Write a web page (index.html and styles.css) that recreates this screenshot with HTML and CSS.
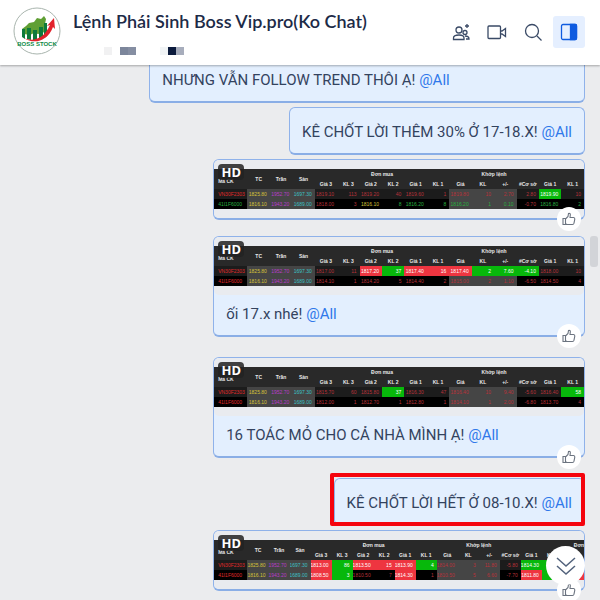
FILE: index.html
```html
<!DOCTYPE html>
<html lang="vi">
<head>
    <meta charset="UTF-8">
    <meta name="viewport" content="width=device-width, initial-scale=1.0">
    <title>Lệnh Phái Sinh Boss Vip.pro</title>
    <link rel="stylesheet" href="styles.css">
</head>
<body>
    <header class="chat-header">
        <svg class="avatar" viewBox="0 0 48 48" role="img" aria-label="Boss Stock">
            <circle cx="24" cy="24" r="23" fill="#fff" stroke="#a9b5ae" stroke-width="1"/>
            <path d="M9 22l4-3 3-3 5-1 3-4 4 1 3-3 2 3-1 5 1 5-3 4-5 1-4-1-4 2-6-1z" fill="#5f9f34"/>
            <path d="M9 22h3v10l-3-2zM14 21h4v12l-4-1zM20 23h4v10h-4zM26 20h4v12l-4 1zM31 16h3v13l-3 2z" fill="#0e7a3c"/>
            <path d="M11 31c9 4 20 1 26-13l-3 1 7-8 1 11-2-2c-5 14-19 18-29 11z" fill="#e2222c"/>
            <text x="24" y="39" text-anchor="middle" class="avatar-text">BOSS STOCK</text>
        </svg>
        <div class="chat-info">
            <h1>Lệnh Phái Sinh Boss Vip.pro(Ko Chat)</h1>
            <div class="masked">
                <span class="m1"></span>
                <span class="m2"></span>
                <span class="m3"></span>
            </div>
        </div>
        <nav class="actions">
            <button type="button" aria-label="Thêm thành viên">
                <svg viewBox="0 0 20 20">
                    <circle cx="8" cy="8" r="3"/>
                    <path d="M2.500 17.500v-1.500c0-2 2-3 5.500-3s5 1 5 3v1.500z"/>
                    <circle cx="14" cy="10.500" r="2"/>
                    <path d="M14 14c2.500 0 4 1 4 3h-3M16 2v4M14 4h4"/>
                </svg>
            </button>
            <button type="button" aria-label="Gọi video">
                <svg viewBox="0 0 20 20">
                    <rect x="1" y="4" width="12.500" height="12.500" rx="1"/>
                    <path d="M13.500 9h1.500l3.500-2.500v8L15 12h-1.500"/>
                </svg>
            </button>
            <button type="button" aria-label="Tìm kiếm">
                <svg viewBox="0 0 20 20">
                    <circle cx="9" cy="9" r="6.500"/>
                    <path d="M14 14l4.500 4.500"/>
                </svg>
            </button>
            <button type="button" class="active" aria-label="Thông tin hội thoại">
                <svg viewBox="0 0 20 20">
                    <rect x="2.500" y="2.500" width="15" height="15" rx="1.500"/>
                    <path d="M11.500 2.500h5q1 0 1 1v13q0 1-1 1h-5z" class="fill"/>
                </svg>
            </button>
        </nav>
    </header>

    <main class="chat">
        <div class="message long">
            GIỮ Ạ, CẢ NHÀ CHỐT MỘT PHẦN VỊ THẾ, ĐANG LỢI
            NHƯNG VẪN FOLLOW TREND THÔI Ạ! <a href="#">@All</a></div>
        <div class="message">KÊ CHỐT LỜI THÊM 30% Ở 17-18.X! <a href="#">@All</a></div>

        <div class="message photo">
            <div class="board" data-board="0"></div>
            <span class="hd">HD</span>
            <button type="button" class="like" aria-label="Thích"></button>
        </div>

        <div class="message photo">
            <div class="board" data-board="1"></div>
            <span class="hd">HD</span>
            <p>ối 17.x nhé! <a href="#">@All</a></p>
            <button type="button" class="like" aria-label="Thích"></button>
        </div>

        <div class="message photo">
            <div class="board" data-board="2"></div>
            <span class="hd">HD</span>
            <p>16 TOÁC MỎ CHO CẢ NHÀ MÌNH Ạ! <a href="#">@All</a></p>
            <button type="button" class="like" aria-label="Thích"></button>
        </div>

        <div class="message marked">KÊ CHỐT LỜI HẾT Ở 08-10.X! <a href="#">@All</a></div>

        <div class="message photo">
            <div class="board" data-board="3"></div>
            <span class="hd">HD</span>
            <button type="button" class="like" aria-label="Thích"></button>
        </div>

        <span class="scroll-thumb"></span>
        <button type="button" class="to-bottom" aria-label="Xuống cuối">
            <svg viewBox="0 0 24 24"><path d="M3 4l9 8 9-8M3 12l9 8 9-8"/></svg>
        </button>
    </main>

    <script src="script.js"></script>
</body>
</html>
```
FILE: styles.css
```css
* {
    box-sizing: border-box;
}

body {
    margin: 0;
    height: 100vh;
    display: flex;
    flex-direction: column;
    font-family: Roboto, "Noto Sans", sans-serif;
    color: #33435e;
    background: #ebecee;
}

button {
    padding: 0;
    border: none;
    background: none;
    cursor: pointer;
}

a {
    color: #2f78ea;
    text-decoration: none;
}

/* Header */
.chat-header {
    display: flex;
    flex: none;
    height: 65px;
    padding: 7px 15px 0 13px;
    background: #fff;
    box-shadow: 0 1px 2px rgba(0, 0, 0, 0.3);
    z-index: 2;
}

.avatar {
    width: 48px;
    height: 48px;
    flex: none;
}

.avatar-text {
    font: bold 6px "Liberation Sans", sans-serif;
    fill: #0e8a45;
}

.chat-info {
    flex: 1;
    margin-left: 12px;
}

h1 {
    margin: 2px 0 0;
    font: 600 18px/24px Lato, sans-serif;
    color: #1d2b47;
    white-space: nowrap;
}

.masked {
    display: flex;
    margin: 14px 0 0 31px;
}

.masked span {
    height: 8px;
}

.m1 {
    width: 8px;
    background: #f1f1f2;
}

.m2 {
    width: 16px;
    margin-left: 8px;
    background: linear-gradient(90deg, #7c869b 50%, #858ea2 50%);
}

.m3 {
    width: 24px;
    margin-left: 24px;
    background: linear-gradient(90deg, #f1f4f6 33%, #0b1a3c 33%, #0b1a3c 67%, #a7adbc 67%);
}

.actions {
    display: flex;
    gap: 4px;
    padding-top: 9px;
}

.actions button {
    width: 32px;
    height: 32px;
    border-radius: 3px;
}

.actions svg {
    display: block;
    width: 20px;
    height: 20px;
    margin: auto;
    fill: none;
    stroke: #3a4a66;
    stroke-width: 1.3;
}

.actions .active {
    background: #e5efff;
}

.actions .active svg {
    stroke: #0f5be0;
}

.actions .fill {
    fill: #0f5be0;
}

/* Conversation */
.chat {
    position: relative;
    flex: 1;
    min-height: 0;
    display: flex;
    flex-direction: column;
    justify-content: flex-end;
    align-items: flex-end;
    gap: 4px;
    padding: 0 15px 9px 4px;
    overflow: hidden;
}

.message {
    position: relative;
    flex: none;
    max-width: 75%;
    padding: 12px 12px 9px;
    border: 1px solid #8fb2ea;
    border-bottom: 2px solid #8aaee6;
    border-radius: 6px;
    background: #e3effe;
    font-size: 15px;
    line-height: 24px;
}

.long {
    width: 75%;
    white-space: pre-line;
}

.photo {
    width: 64%;
    padding: 0;
}

.photo + .photo {
    margin-top: 12px;
}

.photo p {
    margin: 0;
    padding: 7px 12px 9px;
}

.photo:has(p) + .message {
    margin-top: 16px;
}

.board {
    padding: 9px 0;
    border-radius: 5px;
    background: #e9ebef;
}

.board table {
    width: 100%;
    table-layout: fixed;
    border-collapse: collapse;
    background: #292929;
    font: 5px/10px "Liberation Sans", sans-serif;
    color: #e8e8e8;
}

.board th,
.board td {
    height: 10px;
    padding: 0;
    overflow: hidden;
    white-space: nowrap;
}

.board td {
    padding-right: 3px;
    text-align: right;
    color: #b8323a;
    background: #000;
}

.board tr:nth-child(1) td {
    background: #1c1c1c;
}

.board .code {
    width: 9%;
    padding-left: 4px;
    text-align: left;
    color: #e02a2a;
}

.board th.code {
    padding-top: 4px;
    color: #e8e8e8;
}

.board .cut {
    text-align: right;
}

.board tr td.ref {
    background: #454545;
}

.board .yellow {
    color: #d5c238;
}

.board .purple {
    color: #b93cc8;
}

.board .cyan {
    color: #3cc0c4;
}

.board .green {
    color: #28b040;
}

.board tr td.up {
    color: #fff;
    background: #07b80b;
}

.board tr td.down {
    color: #fff;
    background: #ee3540;
}

.hd {
    position: absolute;
    top: 4px;
    left: 4px;
    width: 26px;
    border-radius: 4px;
    background: rgba(34, 34, 34, 0.85);
    color: #fff;
    font-family: "Noto Sans", sans-serif;
    font-weight: 700;
    font-size: 13px;
    line-height: 16px;
    text-align: center;
}

.like {
    position: absolute;
    right: 3px;
    bottom: -13px;
    width: 24px;
    height: 24px;
    border-radius: 50%;
    background: #fff;
    z-index: 1;
}

.like svg {
    display: block;
    width: 14px;
    height: 14px;
    margin: auto;
    fill: none;
    stroke: #6c7480;
    stroke-width: 1.1;
}

/* Red frame round the closing call */
.marked::after {
    content: "";
    position: absolute;
    inset: -6px -1px -2px -5px;
    border: 4px solid #f5040d;
    border-radius: 2px;
}

.scroll-thumb {
    position: absolute;
    top: 171px;
    right: 2px;
    width: 8px;
    height: 31px;
    border-radius: 3px;
    background: #d2d4d8;
}

.to-bottom {
    position: absolute;
    right: 15px;
    bottom: 15px;
    width: 39px;
    height: 39px;
    border-radius: 50%;
    background: #fff;
    z-index: 2;
}

.to-bottom svg {
    display: block;
    width: 24px;
    height: 24px;
    margin: auto;
    fill: none;
    stroke: #52627c;
    stroke-width: 1.5;
}
```
FILE: script.js
```js
// Cell format: "value" or "value:class class"
const boards = [
    [
        'VN30F2303|1825.80:ref yellow|1952.70:ref purple|1697.30:ref cyan|1819.10|113|1819.20|40|1819.60|1|1819.80:ref|10:ref|2.70:ref|2.80|1819.90:up|10',
        '41I1F6000:green|1816.10:ref yellow|1943.20:ref purple|1689.00:ref cyan|1818.00|3|1816.10:yellow|8:green|1816.20:green|8:green|1816.20:ref green|1:ref green|0.10:ref green|-0.70|1816.80:green|2:green'
    ],
    [
        'VN30F2303|1825.80:ref yellow|1952.70:ref purple|1697.30:ref cyan|1817.00|11|1817.20:down|37:up|1817.40:down|16:down|1817.40:down|2:up|7.60:up|-4.10:up|1818.00|10',
        '41I1F6000|1816.10:ref yellow|1943.20:ref purple|1689.00:ref cyan|1814.10|1|1814.20|5|1814.40|2|1815.00:ref|2:ref|1.10:ref|-6.50|1814.50|4'
    ],
    [
        'VN30F2303|1825.80:ref yellow|1952.70:ref purple|1697.30:ref cyan|1815.70|60|1815.80|37:up|1816.30|47|1816.40:ref|10:ref|9.40:ref|-5.60|1816.40|58:up',
        '41I1F6000|1816.10:ref yellow|1943.20:ref purple|1689.00:ref cyan|1812.00|1|1812.70|1|1812.80|1|1814.10:ref|1:ref|2.00:ref|-6.80|1813.70|4'
    ],
    [
        'VN30F2303|1825.80:ref yellow|1952.70:ref purple|1697.30:ref cyan|1813.00:down|86:up|1813.50:down|15:down|1813.90:down|4:up|1814.00:ref|3:ref|11.80:ref|-5.80|1814.30:up|11:up|1814.50:up',
        '41I1F6000|1816.10:ref yellow|1943.20:ref purple|1689.00:ref cyan|1808.50:down|3:up|1810.50|7|1814.30:down|1|1810.50:ref|5:ref|6.60:ref|-7.70|1811.80:down|9:up|1812.00:down'
    ]
];

const thumb = '<svg viewBox="0 0 14 14"><path d="M1 6.500h2.500V12.500H1zM3.500 7l2.500-2.500.5-3c1.500-.5 2 .5 1.800 1.500L8 5.500h3.500q1.500.2 1.300 1.700l-.8 4q-.3 1.300-1.500 1.300H5l-1.500-.8"/></svg>';

function cell(text) {
    const [value, cls] = text.split(':');
    return `<td class="${cls || ''}">${value}</td>`;
}

function row(line) {
    const cells = line.split('|');
    const [code, cls] = cells[0].split(':');
    return `<tr><td class="code ${cls || ''}">${code}</td>${cells.slice(1).map(cell).join('')}</tr>`;
}

document.querySelectorAll('.board').forEach(el => {
    const lines = boards[el.dataset.board];
    const wide = lines[0].split('|').length > 16;
    const names = ['Giá 3', 'KL 3', 'Giá 2', 'KL 2', 'Giá 1', 'KL 1', 'Giá', 'KL', '+/-', '#Cơ sở', 'Giá 1', 'KL 1'];
    if (wide) names.push('Giá 2');

    el.innerHTML = `<table>
        <thead>
            <tr>
                <th class="code" rowspan="2">Mã CK</th>
                <th rowspan="2">TC</th><th rowspan="2">Trần</th><th rowspan="2">Sàn</th>
                <th colspan="6">Đơn mua</th>
                <th colspan="4">Khớp lệnh</th>
                ${wide ? '<th colspan="3" class="cut">Đơn</th>' : '<th colspan="2"></th>'}
            </tr>
            <tr>${names.map(n => `<th>${n}</th>`).join('')}</tr>
        </thead>
        <tbody>${lines.map(row).join('')}</tbody>
    </table>`;
});

document.querySelectorAll('.like').forEach(btn => {
    btn.innerHTML = thumb;
});
```
